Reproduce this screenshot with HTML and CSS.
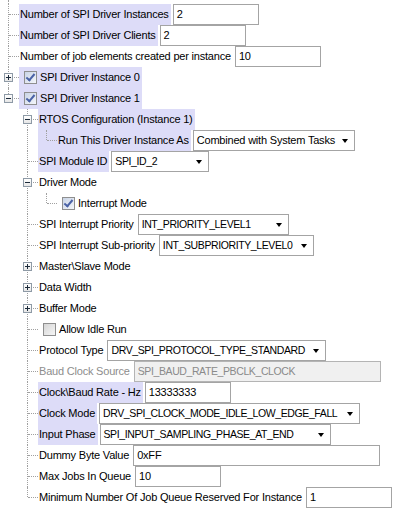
FILE: index.html
```html
<!DOCTYPE html>
<html lang="en">
<head>
    <meta charset="utf-8" />
    <title>SPI Driver</title>
    <link rel="stylesheet" href="styles.css">
</head>
<body>
    <div class="tree">
        <div class="row top"><span class="g v"></span></div>
        <div class="row">
            <span class="g t"></span>
            <span class="node hl">Number of SPI Driver Instances</span>
            <span class="field">2</span>
        </div>
        <div class="row">
            <span class="g t"></span>
            <span class="node hl">Number of SPI Driver Clients</span>
            <span class="field">2</span>
        </div>
        <div class="row">
            <span class="g t"></span>
            <span class="node">Number of job elements created per instance</span>
            <span class="field">10</span>
        </div>
        <div class="row">
            <span class="g t"><i class="exp plus"></i></span>
            <span class="node chk hl"><span class="cb on"></span>SPI Driver Instance 0</span>
        </div>
        <div class="row">
            <span class="g l"><i class="exp"></i></span>
            <span class="node chk hl"><span class="cb on"></span>SPI Driver Instance 1</span>
        </div>
        <!-- instance 1 -->
        <div class="row">
            <span class="g"></span>
            <span class="g t"><i class="exp"></i></span>
            <span class="node hl">RTOS Configuration (Instance 1)</span>
        </div>
        <div class="row">
            <span class="g"></span>
            <span class="g v"></span>
            <span class="g l hl"></span>
            <span class="node hl">Run This Driver Instance As</span>
            <span class="field combo w162">Combined with System Tasks<i class="arrow"></i></span>
        </div>
        <div class="row">
            <span class="g"></span>
            <span class="g t"></span>
            <span class="node hl">SPI Module ID</span>
            <span class="field combo code w98">SPI_ID_2<i class="arrow"></i></span>
        </div>
        <div class="row">
            <span class="g"></span>
            <span class="g t"><i class="exp"></i></span>
            <span class="node">Driver Mode</span>
        </div>
        <div class="row">
            <span class="g"></span>
            <span class="g v"></span>
            <span class="g l"></span>
            <span class="node chk"><span class="cb on"></span>Interrupt Mode</span>
        </div>
        <div class="row">
            <span class="g"></span>
            <span class="g t"></span>
            <span class="node">SPI Interrupt Priority</span>
            <span class="field combo code w151">INT_PRIORITY_LEVEL1<i class="arrow"></i></span>
        </div>
        <div class="row">
            <span class="g"></span>
            <span class="g t"></span>
            <span class="node">SPI Interrupt Sub-priority</span>
            <span class="field combo code w155">INT_SUBPRIORITY_LEVEL0<i class="arrow"></i></span>
        </div>
        <div class="row">
            <span class="g"></span>
            <span class="g t"><i class="exp plus"></i></span>
            <span class="node">Master\Slave Mode</span>
        </div>
        <div class="row">
            <span class="g"></span>
            <span class="g t"><i class="exp plus"></i></span>
            <span class="node">Data Width</span>
        </div>
        <div class="row">
            <span class="g"></span>
            <span class="g t"><i class="exp plus"></i></span>
            <span class="node">Buffer Mode</span>
        </div>
        <div class="row">
            <span class="g"></span>
            <span class="g t"></span>
            <span class="node chk"><span class="cb"></span>Allow Idle Run</span>
        </div>
        <div class="row">
            <span class="g"></span>
            <span class="g t"></span>
            <span class="node">Protocol Type</span>
            <span class="field combo code w219">DRV_SPI_PROTOCOL_TYPE_STANDARD<i class="arrow"></i></span>
        </div>
        <div class="row">
            <span class="g"></span>
            <span class="g t"></span>
            <span class="node off">Baud Clock Source</span>
            <span class="field code wide off">SPI_BAUD_RATE_PBCLK_CLOCK</span>
        </div>
        <div class="row">
            <span class="g"></span>
            <span class="g t"></span>
            <span class="node hl">Clock\Baud Rate - Hz</span>
            <span class="field">13333333</span>
        </div>
        <div class="row">
            <span class="g"></span>
            <span class="g t"></span>
            <span class="node hl">Clock Mode</span>
            <span class="field combo code w261">DRV_SPI_CLOCK_MODE_IDLE_LOW_EDGE_FALL<i class="arrow"></i></span>
        </div>
        <div class="row">
            <span class="g"></span>
            <span class="g t"></span>
            <span class="node hl">Input Phase</span>
            <span class="field combo code w231">SPI_INPUT_SAMPLING_PHASE_AT_END<i class="arrow"></i></span>
        </div>
        <div class="row">
            <span class="g"></span>
            <span class="g t"></span>
            <span class="node">Dummy Byte Value</span>
            <span class="field wide">0xFF</span>
        </div>
        <div class="row">
            <span class="g"></span>
            <span class="g t"></span>
            <span class="node">Max Jobs In Queue</span>
            <span class="field">10</span>
        </div>
        <div class="row">
            <span class="g"></span>
            <span class="g l"></span>
            <span class="node">Minimum Number Of Job Queue Reserved For Instance</span>
            <span class="field">1</span>
        </div>
    </div>
</body>
</html>
```

FILE: styles.css
```css
body {
    margin: 0;
    background-color: #fff;
    font-family: "Liberation Sans", Arial, sans-serif;
    font-size: 11px;
    letter-spacing: -0.2px;
    color: #000;
}
.row {
    display: flex;
    height: 21px;
    line-height: 21px;
    white-space: nowrap;
}
.row.top {
    height: 4px;
}
/* tree guide cells */
.g {
    position: relative;
    flex: none;
    width: 19px;
    height: 100%;
}
.g.v::before,
.g.t::before,
.g.l::before {
    content: '';
    position: absolute;
    left: 8px;
    top: 0;
    bottom: 0;
    border-left: 1px dotted #a0a0a0;
}
.g.l::before {
    bottom: auto;
    height: 10px;
}
.g.t::after,
.g.l::after {
    content: '';
    position: absolute;
    left: 9px;
    right: 0;
    top: 10px;
    border-top: 1px dotted #a0a0a0;
}
.exp {
    position: absolute;
    left: 4px;
    top: 6px;
    width: 9px;
    height: 9px;
    box-sizing: border-box;
    border: 1px solid #8e9aa6;
    background: linear-gradient(#fff, #e6e6e6);
    z-index: 1;
}
.exp::before {
    content: '';
    position: absolute;
    left: 1px;
    top: 3px;
    width: 5px;
    height: 1px;
    background-color: #1b2a3a;
}
.exp.plus::after {
    content: '';
    position: absolute;
    left: 3px;
    top: 1px;
    width: 1px;
    height: 5px;
    background-color: #1b2a3a;
}
/* node labels */
.node {
    flex: none;
    padding: 0 2px 0 1px;
}
.hl {
    background-color: #dddcf8;
}
.node.off {
    color: #8d8d8d;
}
.node.chk {
    display: flex;
    align-items: center;
    padding-left: 5px;
}
.cb {
    position: relative;
    width: 13px;
    height: 13px;
    box-sizing: border-box;
    margin-right: 3px;
    border: 1px solid #8f8f8f;
    background: linear-gradient(135deg, #d6d6d6, #f6f6f6);
}
.cb.on {
    background: linear-gradient(135deg, #c9d4e6, #f4f6fa);
}
.cb.on::after {
    content: '';
    position: absolute;
    left: 3px;
    top: 0;
    width: 3px;
    height: 7px;
    border-right: 2px solid #4a62a6;
    border-bottom: 2px solid #4a62a6;
    transform: rotate(40deg);
}
/* editors */
.field {
    flex: none;
    box-sizing: border-box;
    width: 86px;
    height: 21px;
    line-height: 19px;
    margin-left: 2px;
    padding-left: 3px;
    border: 1px solid #a4a4a4;
    background-color: #fff;
    overflow: hidden;
}
.field.code {
    font-size: 10.5px;
    letter-spacing: -0.4px;
}
.field.wide {
    width: 247px;
}
.field.off {
    color: #8a8a8a;
    background-color: #f0f0f0;
    border-color: #b4b4b4;
}
.combo {
    display: flex;
    align-items: center;
    padding-right: 6px;
}
.arrow {
    flex: none;
    width: 0;
    height: 0;
    margin-left: auto;
    border-top: 4px solid #000;
    border-left: 3.5px solid transparent;
    border-right: 3.5px solid transparent;
}
.w98 { width: 98px; }
.w151 { width: 151px; }
.w155 { width: 155px; }
.w162 { width: 162px; }
.w219 { width: 219px; }
.w231 { width: 231px; }
.w261 { width: 261px; }
```
